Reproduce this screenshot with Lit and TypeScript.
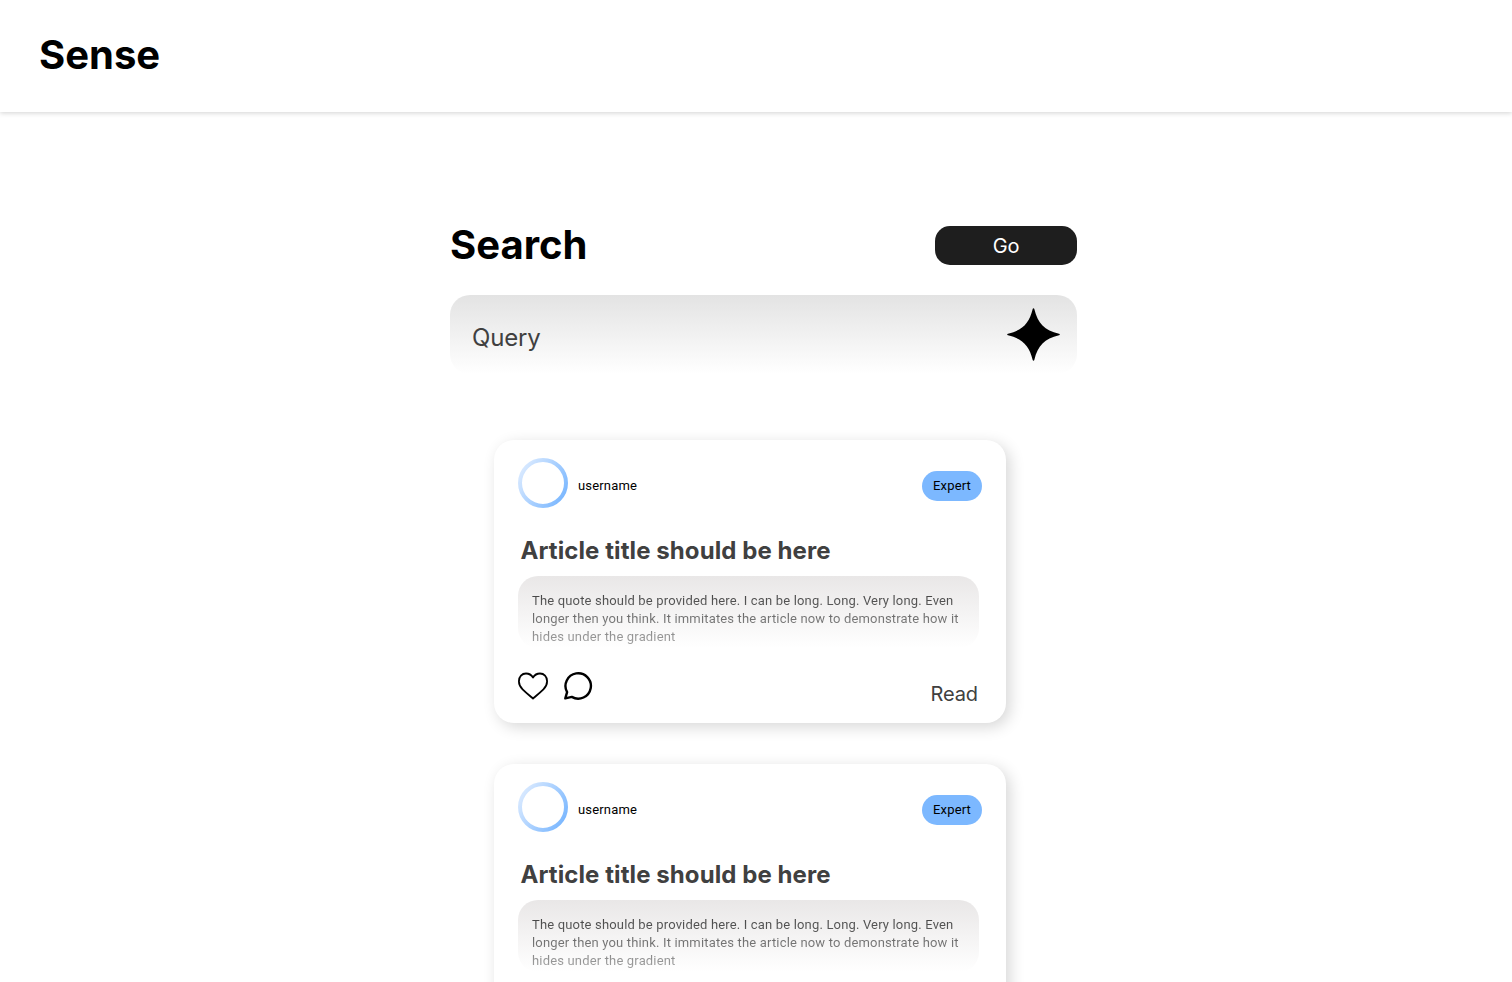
import { LitElement, html, css } from "lit";
import { customElement } from "lit/decorators.js";

@customElement("article-card")
class ArticleCard extends LitElement {
  static styles = css`
    :host { display: block; }
    .card {
      box-sizing: border-box;
      width: 512px;
      height: 283px;
      padding: 18px 24px 0;
      border-radius: 20px;
      background: #fff;
      box-shadow: 4px 4px 15px rgba(0, 0, 0, 0.16);
      display: flex;
      flex-direction: column;
    }
    .top { display: flex; align-items: center; height: 50px; }
    .avatar { width: 50px; height: 50px; display: block; }
    .name {
      margin: 5px auto 0 10px;
      font: 400 13px/18px Roboto, sans-serif;
      letter-spacing: 0.165px;
      color: #000;
    }
    .badge {
      width: 60px;
      height: 30px;
      margin-top: 6px;
      border-radius: 15px;
      background: #7cb8ff;
      font: 400 13px/30px Roboto, sans-serif;
      letter-spacing: 0.165px;
      text-align: center;
      color: #000;
    }
    .title {
      margin: 27px 0 0 2.5px;
      font: 700 24px/32px Inter, sans-serif;
      letter-spacing: 0.08px;
      color: #404040;
    }
    .quote {
      box-sizing: border-box;
      width: 461px;
      height: 72px;
      margin-top: 9px;
      padding: 16px 0 0 14px;
      border-radius: 20px;
      background: linear-gradient(#e9e7e7, #fff);
    }
    .text {
      margin: 0;
      width: 440px;
      font: 400 13px/18px Roboto, sans-serif;
      letter-spacing: 0.165px;
      color: transparent;
      background: linear-gradient(#404040, #a6a6a6);
      -webkit-background-clip: text;
      background-clip: text;
    }
    .actions { display: flex; gap: 15px; margin-top: 23px; align-items: flex-start; }
    .icon { display: block; }
    .read {
      margin: 9px 4px 0 auto;
      font: 400 20px/28px Inter, sans-serif;
      letter-spacing: -0.1px;
      color: #404040;
    }
  `;
  render() {
    return html`
      <article class="card">
        <div class="top">
          <svg class="avatar" viewBox="0 0 50 50">
            <defs>
              <linearGradient id="ring" x1="0" y1="0.15" x2="1" y2="0.75">
                <stop offset="0" stop-color="#dcebff" />
                <stop offset="1" stop-color="#7cb8ff" />
              </linearGradient>
            </defs>
            <circle cx="25" cy="25" r="23" fill="none" stroke="url(#ring)" stroke-width="4" />
          </svg>
          <span class="name">username</span>
          <span class="badge">Expert</span>
        </div>
        <h2 class="title">Article title should be here</h2>
        <div class="quote">
          <p class="text">
            The quote should be provided here. I can be long. Long. Very long. Even<br />longer then
            you think. It immitates the article now to demonstrate how it<br />hides under the
            gradient
          </p>
        </div>
        <div class="actions">
          <svg class="icon" width="30" height="30" viewBox="0 0 30 30" fill="none" stroke="#000" stroke-width="1.8" stroke-linejoin="round">
            <path d="M15 27.6C12.5 25.4 8.5 22.1 4.6 18.3C2 15.7 .9 13 .9 10.2C.9 5.6 4 2.5 8 2.5C11 2.5 13.4 3.9 15 6.5C16.6 3.9 19 2.5 22 2.5C26 2.5 29.1 5.6 29.1 10.2C29.1 13 28 15.7 25.4 18.3C21.5 22.1 17.5 25.4 15 27.6Z" />
          </svg>
          <svg class="icon" width="30" height="30" viewBox="0 0 30 30" fill="none" stroke="#000" stroke-width="2.4" stroke-linejoin="round">
            <path d="M4.1 21.1A12.7 12.7 0 1 1 8.8 25.9L2.3 27.4Z" />
          </svg>
          <span class="read">Read</span>
        </div>
      </article>
    `;
  }
}

@customElement("app-root")
class AppRoot extends LitElement {
  static styles = css`
    :host {
      display: block;
      height: 982px;
      overflow: hidden;
      background: #fff;
      font-family: Inter, sans-serif;
    }
    .header {
      box-sizing: border-box;
      height: 112px;
      padding: 30px 39px 0;
      box-shadow: 0 1px 5px rgba(0, 0, 0, 0.18);
    }
    .heading { margin: 0; font: 700 40px/50px Inter, sans-serif; color: #000; }
    .search { width: 627px; margin: 108px 0 0 450px; }
    .row { display: flex; justify-content: space-between; }
    .go {
      width: 142px;
      height: 39px;
      margin-top: 6px;
      border-radius: 15px;
      background: #1e1e1e;
      color: #fff;
      font: 400 20px/40px Inter, sans-serif;
      letter-spacing: -0.1px;
      text-align: center;
    }
    .field {
      box-sizing: border-box;
      height: 79px;
      margin-top: 25px;
      padding: 13px 17px 0 22px;
      border-radius: 20px;
      background: linear-gradient(#e3e3e3, #fff);
      display: flex;
      justify-content: space-between;
    }
    .query {
      margin-top: 14px;
      font: 400 24px/32px Inter, sans-serif;
      letter-spacing: -0.15px;
      color: #404040;
    }
    .star { display: block; }
    .feed { display: flex; flex-direction: column; gap: 41px; margin: 66px 0 0 494px; width: 512px; }
  `;
  render() {
    return html`
      <header class="header"><h1 class="heading">Sense</h1></header>
      <main>
        <section class="search">
          <div class="row">
            <h1 class="heading">Search</h1>
            <div class="go">Go</div>
          </div>
          <div class="field">
            <span class="query">Query</span>
            <svg class="star" width="53" height="53" viewBox="0 0 53 53">
              <path d="M26.5 .2Q27.1 .2 27.3 1C30.8 15.5 37.5 22.2 52 25.7Q52.8 25.9 52.8 26.5Q52.8 27.1 52 27.3C37.5 30.8 30.8 37.5 27.3 52Q27.1 52.8 26.5 52.8Q25.9 52.8 25.7 52C22.2 37.5 15.5 30.8 1 27.3Q.2 27.1 .2 26.5Q.2 25.9 1 25.7C15.5 22.2 22.2 15.5 25.7 1Q25.9 .2 26.5 .2Z" />
            </svg>
          </div>
        </section>
        <section class="feed">
          <article-card></article-card>
          <article-card></article-card>
        </section>
      </main>
    `;
  }
}
